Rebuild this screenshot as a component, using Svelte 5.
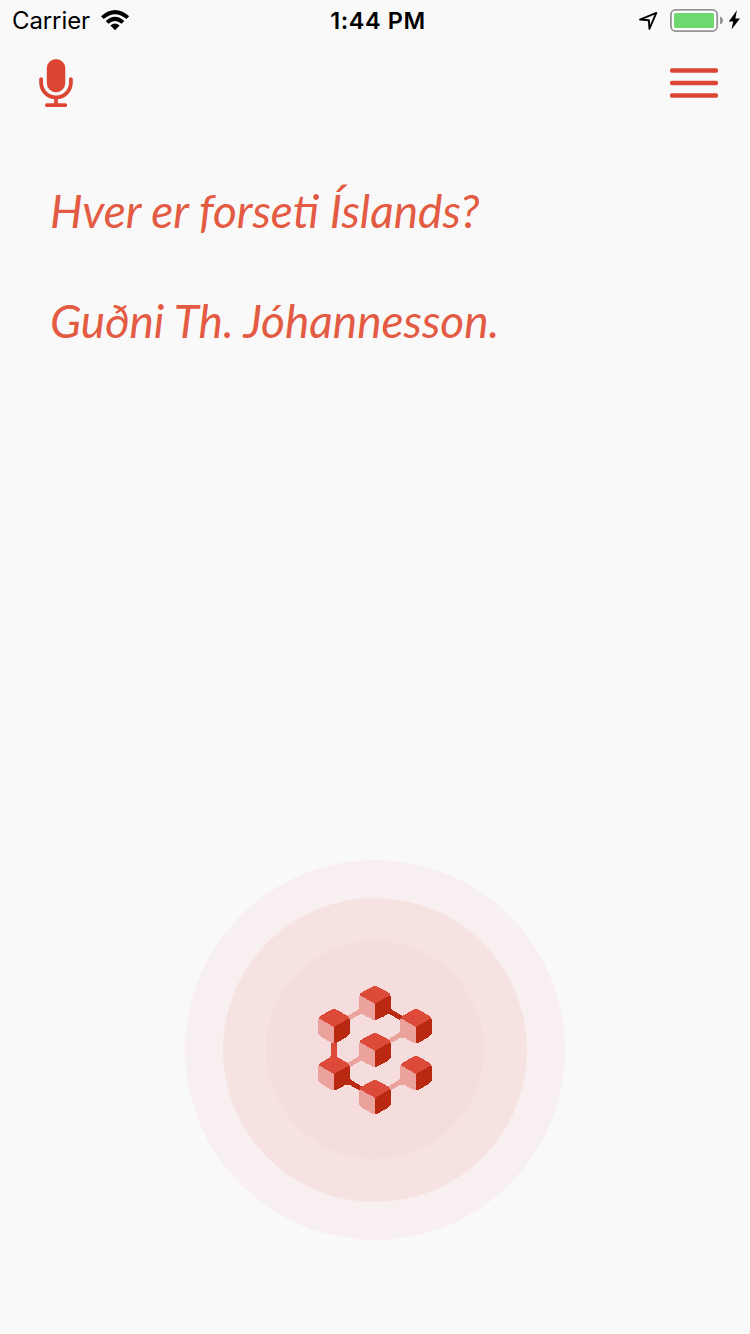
<script>
  const cubes = [[375, 1003.3], [334, 1026.5], [416, 1026.5], [375, 1050.3], [334, 1073.5], [416, 1073.5], [375, 1097.4]];
  const lightLinks = [[375, 1003.3], [416, 1026.5], [375, 1050.3], [416, 1073.5]];
  const darkLinks = [[375, 1003.3], [334, 1073.5]];
</script>

<div class="screen">
  <header class="status">
    <div class="left">
      <span class="carrier">Carrier</span>
      <svg width="30" height="22" viewBox="100 9 30 22">
        <path d="M101 16.2Q115 3.8 129.2 16.2L126.4 19Q115 9.4 103.7 19Z" />
        <path d="M105.7 21Q115 12.4 124.4 21L121.6 23.8Q115 18.4 108.4 23.8Z" />
        <path d="M110.4 25.6Q115 21.5 119.6 25.6L115 30.2Z" />
      </svg>
    </div>
    <time>1:44 PM</time>
    <div class="right">
      <svg width="110" height="30" viewBox="636 6 110 30">
        <path d="M640 19.6L656.3 12.9L649.4 28.8L648.9 20.2Z" fill="none" stroke="#000" stroke-width="1.9" stroke-linejoin="round" />
        <rect x="670.9" y="9.9" width="46.3" height="21.2" rx="4.8" fill="#fff" stroke="#949494" stroke-width="1.8" />
        <rect x="674" y="13" width="40" height="15" rx="1.5" fill="#6dd770" />
        <path d="M720 16.5Q723 17.6 723 20.5T720 24.5Z" fill="#949494" />
        <path d="M736.9 10.2L728.8 21.5H733.2L731.5 29.6L740 18.4H735.4Z" />
      </svg>
    </div>
  </header>

  <nav>
    <button aria-label="Microphone">
      <svg width="36" height="50" viewBox="38 58 36 50">
        <rect x="46.8" y="59" width="18.5" height="33.2" rx="9.25" fill="#dc4534" />
        <path d="M41.1 79.2V82.5A14.9 14.9 0 0 0 70.9 82.5V79.2M56 97.5V105M46.9 105.2H65.2" fill="none" stroke="#dc4534" stroke-width="3.8" stroke-linecap="round" />
      </svg>
    </button>
    <button aria-label="Menu">
      <svg width="48" height="32" viewBox="670 67 48 32">
        <g fill="#dc4534">
          <rect x="670" y="68.3" width="48" height="4.5" rx="1.7" />
          <rect x="670" y="80.8" width="48" height="4.5" rx="1.7" />
          <rect x="670" y="93.2" width="48" height="4.5" rx="1.7" />
        </g>
      </svg>
    </button>
  </nav>

  <main>
    <p class="question">Hver er forseti Íslands?</p>
    <p class="answer">Guðni Th. Jóhannesson.</p>
  </main>

  <footer>
    <svg width="380" height="380" viewBox="185 860 380 380">
      <circle cx="375" cy="1050" r="190" fill="#f8eff0" />
      <circle cx="375" cy="1050" r="152" fill="#f6e2e0" />
      <circle cx="375" cy="1050" r="109" fill="#f4dddc" />
      <g shape-rendering="crispEdges">
        {#each lightLinks as [x, y]}
          <path transform="translate({x} {y})" d="M-28 13L-18 7Q-16 5.500 -16 3H-8V14L-10.500 11.800Q-13.500 10.500 -16 11.500L-28 18.700Z" fill="#eba19c" />
        {/each}
        {#each darkLinks as [x, y]}
          <path transform="translate({x} {y})" d="M28 13L18 7Q16 5.500 16 3H8V14L10.500 11.800Q13.500 10.500 16 11.500L28 18.700Z" fill="#b92810" />
        {/each}
        <path d="M331 1041H337V1055Q337 1057.500 340 1059L334 1064L328 1059Q331 1057.500 331 1055Z" fill="#dd4a3a" />
        {#each cubes as [x, y]}
          <g transform="translate({x} {y})">
            <path d="M-16 -7L-13 -9H0V17Q-1.500 17 -3 16L-13 10.400Q-16 8.600 -16 5.500Z" fill="#eba19c" />
            <path d="M16 -7L13 -9H0V17Q1.500 16.700 3 16L13 10.400Q16 8.600 16 5.500Z" fill="#b92810" />
            <path d="M-15.600 -8.300Q-14.600 -10.200 -13 -11L-3 -16.500Q0 -17.900 3 -16.500L13 -11Q14.600 -10.200 15.600 -8.300L2.500 -1Q.7 0 0 1Q-.7 0 -2.500 -1Z" fill="#dd4a3a" />
          </g>
        {/each}
      </g>
    </svg>
  </footer>
</div>

<style>
  :global(body) { margin: 0; background: #f9f9f9; }
  .screen { height: 1334px; display: flex; flex-direction: column; background: #f9f9f9; overflow: hidden; }
  svg { display: block; }
  .status { height: 40px; display: grid; grid-template-columns: 1fr auto 1fr; align-items: start; font: 24px/42px Inter, sans-serif; color: #000; }
  .left { display: flex; padding-left: 12px; }
  .left svg { margin: 9px 0 0 10px; }
  .carrier { width: 78px; white-space: nowrap; letter-spacing: -.1px; }
  time { font-size: 23.5px; font-weight: 600; letter-spacing: .6px; padding-left: 6px; }
  .right { display: flex; justify-content: flex-end; padding: 6px 4px 0 0; }
  nav { height: 86px; display: flex; justify-content: space-between; align-items: flex-start; padding: 0 32px 0 38px; }
  button { border: 0; background: none; padding: 18px 0 0; }
  button + button { padding-top: 27px; }
  main { flex: 1; padding: 56px 50px 0; font: italic 400 46px/58px Lato, sans-serif; color: #e35b43; }
  p { margin: 0 0 52px; white-space: nowrap; }
  footer { display: flex; justify-content: center; padding-bottom: 94px; }
</style>
